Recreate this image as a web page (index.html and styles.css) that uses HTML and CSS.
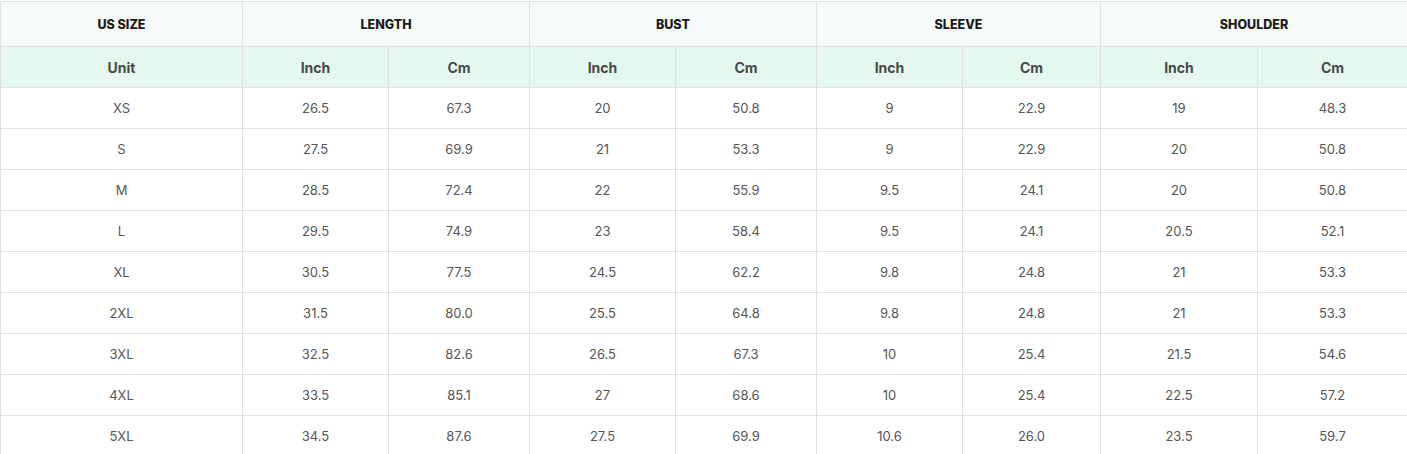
FILE: index.html
```html
<!DOCTYPE html>
<html lang="en">
<head>
<meta charset="utf-8">
<title>Size Chart</title>
<link rel="stylesheet" href="styles.css">
</head>
<body>
<div class="wrap">
  <div class="chart" role="table">
    <div class="cell head">US SIZE</div>
    <div class="cell head span2">LENGTH</div>
    <div class="cell head span2">BUST</div>
    <div class="cell head span2">SLEEVE</div>
    <div class="cell head span2">SHOULDER</div>

    <div class="cell unit">Unit</div>
    <div class="cell unit">Inch</div><div class="cell unit">Cm</div>
    <div class="cell unit">Inch</div><div class="cell unit">Cm</div>
    <div class="cell unit">Inch</div><div class="cell unit">Cm</div>
    <div class="cell unit">Inch</div><div class="cell unit">Cm</div>

    <div class="cell">XS</div><div class="cell">26.5</div><div class="cell">67.3</div><div class="cell">20</div><div class="cell">50.8</div><div class="cell">9</div><div class="cell">22.9</div><div class="cell">19</div><div class="cell">48.3</div>
    <div class="cell">S</div><div class="cell">27.5</div><div class="cell">69.9</div><div class="cell">21</div><div class="cell">53.3</div><div class="cell">9</div><div class="cell">22.9</div><div class="cell">20</div><div class="cell">50.8</div>
    <div class="cell">M</div><div class="cell">28.5</div><div class="cell">72.4</div><div class="cell">22</div><div class="cell">55.9</div><div class="cell">9.5</div><div class="cell">24.1</div><div class="cell">20</div><div class="cell">50.8</div>
    <div class="cell">L</div><div class="cell">29.5</div><div class="cell">74.9</div><div class="cell">23</div><div class="cell">58.4</div><div class="cell">9.5</div><div class="cell">24.1</div><div class="cell">20.5</div><div class="cell">52.1</div>
    <div class="cell">XL</div><div class="cell">30.5</div><div class="cell">77.5</div><div class="cell">24.5</div><div class="cell">62.2</div><div class="cell">9.8</div><div class="cell">24.8</div><div class="cell">21</div><div class="cell">53.3</div>
    <div class="cell">2XL</div><div class="cell">31.5</div><div class="cell">80.0</div><div class="cell">25.5</div><div class="cell">64.8</div><div class="cell">9.8</div><div class="cell">24.8</div><div class="cell">21</div><div class="cell">53.3</div>
    <div class="cell">3XL</div><div class="cell">32.5</div><div class="cell">82.6</div><div class="cell">26.5</div><div class="cell">67.3</div><div class="cell">10</div><div class="cell">25.4</div><div class="cell">21.5</div><div class="cell">54.6</div>
    <div class="cell">4XL</div><div class="cell">33.5</div><div class="cell">85.1</div><div class="cell">27</div><div class="cell">68.6</div><div class="cell">10</div><div class="cell">25.4</div><div class="cell">22.5</div><div class="cell">57.2</div>
    <div class="cell">5XL</div><div class="cell">34.5</div><div class="cell">87.6</div><div class="cell">27.5</div><div class="cell">69.9</div><div class="cell">10.6</div><div class="cell">26.0</div><div class="cell">23.5</div><div class="cell">59.7</div>
  </div>
</div>
</body>
</html>
```

FILE: styles.css
```css
html, body {
  margin: 0;
  padding: 0;
  background: #ffffff;
}

body {
  overflow: hidden;
  font-family: Inter, "Open Sans", sans-serif;
}

.wrap {
  padding-top: 1px;
  width: 1407px;
  overflow: hidden;
}

.chart {
  display: grid;
  grid-template-columns: 241px 145px 140px 145px 140px 145px 137px 156px 149px;
  grid-template-rows: 44px repeat(10, 40px);
  gap: 1px;
  padding: 1px;
  width: max-content;
  background: #e1e1e1;
}

.cell {
  display: flex;
  align-items: center;
  justify-content: center;
  background: #ffffff;
  color: #555555;
  font-size: 13px;
  font-weight: 400;
}

.span2 {
  grid-column: span 2;
}

.head {
  background: #f6fbf9;
  color: #1a1a1a;
  font-size: 12.5px;
  font-weight: 800;
}

.unit {
  background: #e4f8ef;
  color: #484848;
  font-size: 14px;
  font-weight: 700;
}
```
